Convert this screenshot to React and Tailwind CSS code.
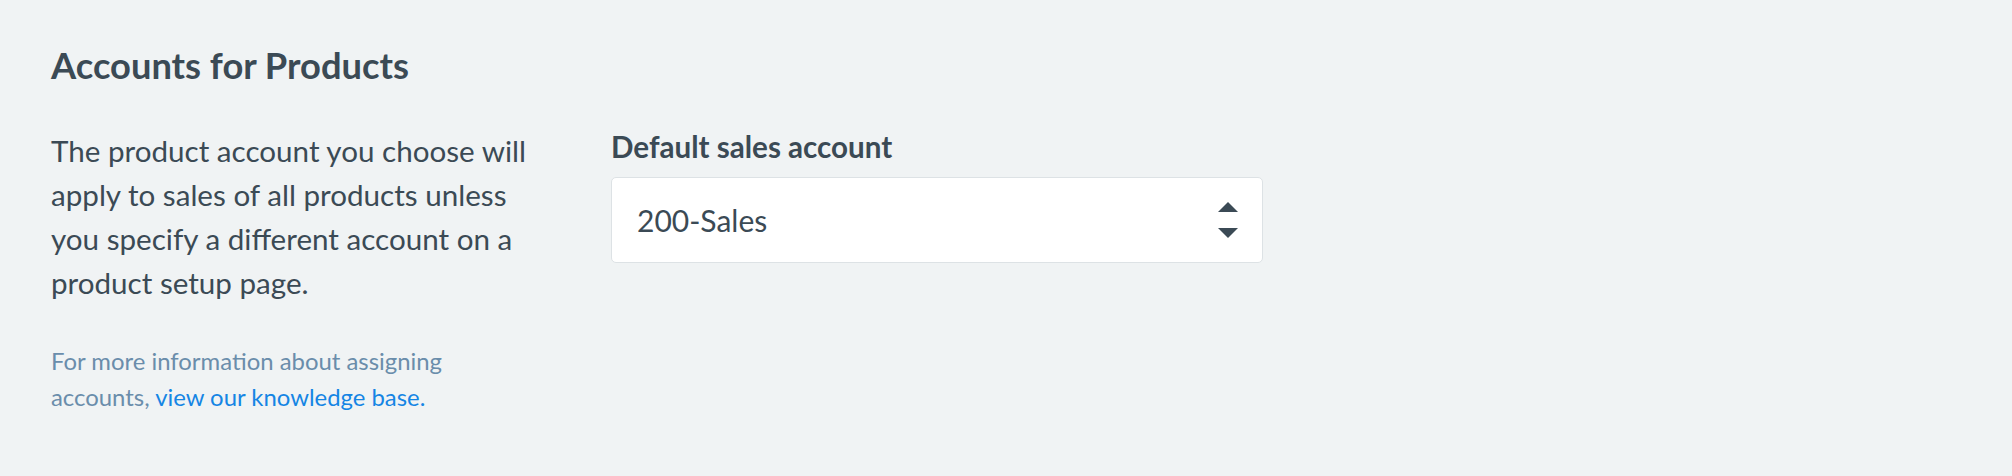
import React from 'react';

const Stepper = () => (
  <svg width="20" height="36" viewBox="0 0 20 36" className="shrink-0">
    <path d="M10 0 L20 10 L0 10 Z" fill="#3b4a55" />
    <path d="M0 26 L20 26 L10 36 Z" fill="#3b4a55" />
  </svg>
);

export default function App() {
  return (
    <div
      className="min-h-[476px] w-full bg-[#f0f3f4] pl-[51px] pt-[42px] text-[#3b4a55]"
      style={{ fontFamily: 'Lato, "Open Sans", sans-serif' }}
    >
      <h2 className="text-[36.3px] leading-[46px] font-bold">Accounts for Products</h2>

      <div className="mt-[41px] flex items-start">
        <div className="w-[560px] shrink-0">
          <p className="w-[490px] text-[29.6px] leading-[44px]">
            The product account you choose will apply to sales of all products unless you
            specify a different account on a product setup page.
          </p>
          <p className="mt-[38px] w-[440px] text-[23.9px] leading-[36px] text-[#6a8dab]">
            For more information about assigning accounts,{' '}
            <a href="#" className="text-[#1585e4]">
              view our knowledge base.
            </a>
          </p>
        </div>

        <div className="-mt-[2px] w-[652px]">
          <label className="block text-[29.6px] leading-[40px] font-bold">Default sales account</label>
          <div className="mt-[10px] flex h-[86px] items-center justify-between rounded-[5px] border border-[#dde2e5] bg-white pl-[25px] pr-[24px]">
            <span className="text-[30px] leading-[36px]">200-Sales</span>
            <Stepper />
          </div>
        </div>
      </div>
    </div>
  );
}
